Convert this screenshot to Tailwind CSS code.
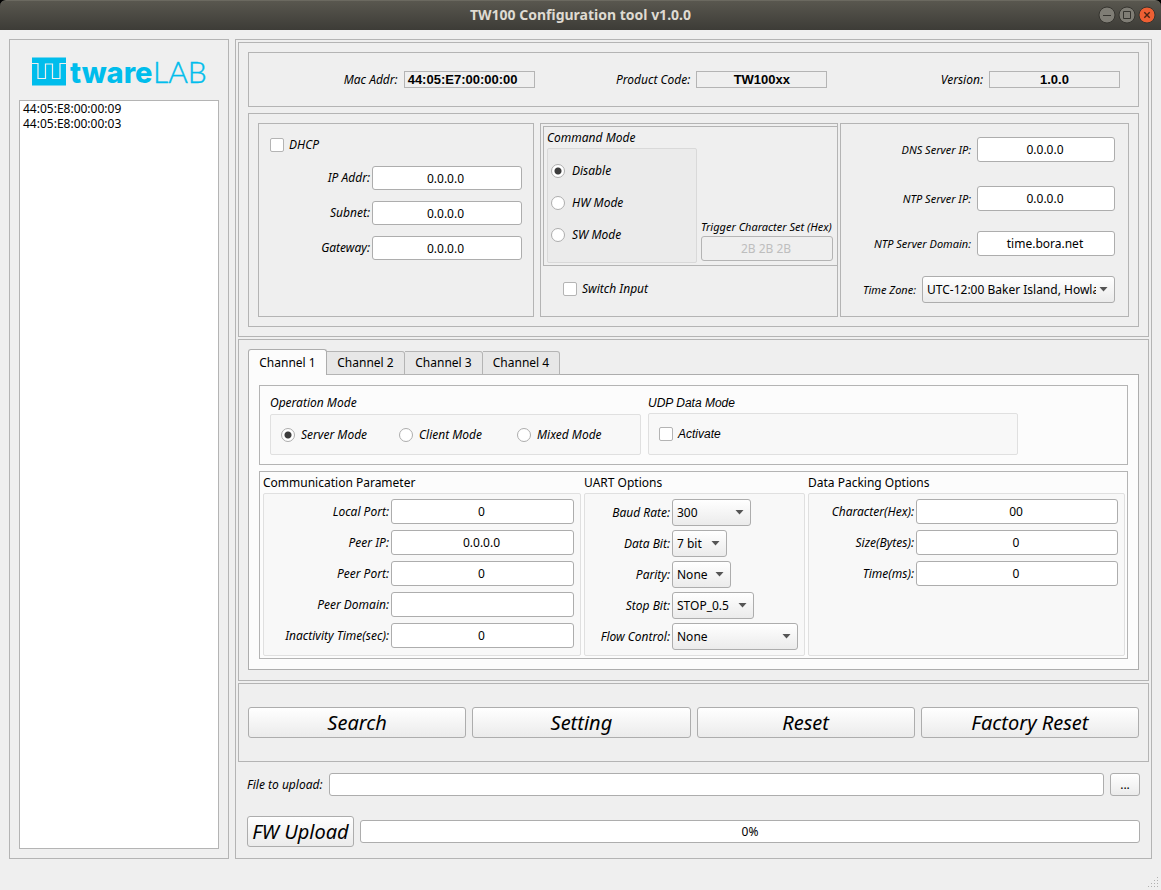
<!DOCTYPE html>
<html lang="en">
<head>
<meta charset="utf-8">
<meta name="viewport" content="width=device-width, initial-scale=1">
<title>TW100 Configuration tool v1.0.0</title>
<script src="https://cdn.jsdelivr.net/npm/@tailwindcss/browser@4"></script>
</head>
<body class="min-h-screen flex flex-col bg-[#efefef] font-['Noto_Sans','Open_Sans',sans-serif] text-[12px] leading-4 text-black">

<header class="bg-black">
  <div class="relative h-[30px] flex items-center justify-center rounded-t-md border-t border-[#6b6960] bg-linear-to-b from-[#59574f] to-[#3d3c37] pb-[2px]">
    <h1 class="text-[14px] font-bold text-[#dfdbd2]">TW100 Configuration tool v1.0.0</h1>
    <div class="absolute right-[5px] top-[5px] flex gap-[2px]">
      <button aria-label="Minimize"><svg class="block" width="18" height="18" viewBox="0 0 18 18"><circle cx="9" cy="9" r="8" fill="#7f7d75" stroke="#35342f"/><path d="M5 9.500h8" stroke="#35342f"/></svg></button>
      <button aria-label="Maximize"><svg class="block" width="18" height="18" viewBox="0 0 18 18"><circle cx="9" cy="9" r="8" fill="#7f7d75" stroke="#35342f"/><path d="M5.500 5.500h7v7h-7z" fill="none" stroke="#35342f"/></svg></button>
      <button aria-label="Close"><svg class="block" width="18" height="18" viewBox="0 0 18 18"><circle cx="9" cy="9" r="8" fill="#ee5f33" stroke="#35342f"/><path d="M6.300 6.300l5.400 5.400M11.700 6.300l-5.400 5.400" stroke="#4a2413" stroke-width="1.400"/></svg></button>
    </div>
  </div>
</header>

<main class="grow flex gap-[6px] px-[9px] pt-[9px]">
  <aside class="w-[220px] shrink-0 flex flex-col border border-[#b4b4b4] px-[9px] pt-[9px] pb-[9px]">
    <div class="h-[46px] mb-[5px] pl-3 flex items-center">
      <svg role="img" aria-label="twareLAB" width="186" height="46" viewBox="0 0 186 46" fill="#00bdec">
        <path d="M1 8.500H35V36.500H1z"/>
        <path d="M1 14.500H7V29.500H14.500V15H21.500V29.500H29V14.500H35" fill="none" stroke="#efefef" stroke-width="1.200"/>
        <text x="39" y="34" font-family="Inter, sans-serif" font-weight="800" font-size="29">tware</text>
        <text x="122" y="34" font-family="Lato, sans-serif" font-weight="300" font-size="30" stroke="#00bdec" stroke-width="0.4">LAB</text>
      </svg>
    </div>
    <ul class="grow border border-[#b4b4b4] bg-white px-[3px] leading-[15px]">
      <li>44:05:E8:00:00:09</li>
      <li>44:05:E8:00:00:03</li>
    </ul>
  </aside>

  <div class="grow min-w-0 flex flex-col gap-[2px] border border-[#b4b4b4] p-[2px]">
    <section class="flex flex-col gap-[6px] border border-[#b4b4b4] p-[9px]">
      <dl class="h-[55px] grid grid-cols-3 gap-[7px] items-center border border-[#b4b4b4] pr-[18px]">
        <div class="flex items-center justify-end gap-[6px]">
          <dt class="italic">Mac Addr:</dt>
          <dd class="w-[131px] h-[17px] border border-[#b4b4b4] px-[3px] font-['Liberation_Sans',sans-serif] text-[13px] leading-[15px] font-bold">44:05:E7:00:00:00</dd>
        </div>
        <div class="flex items-center justify-end gap-[6px]">
          <dt class="italic">Product Code:</dt>
          <dd class="w-[131px] h-[17px] border border-[#b4b4b4] text-center font-['Liberation_Sans',sans-serif] text-[13px] leading-[15px] font-bold">TW100xx</dd>
        </div>
        <div class="flex items-center justify-end gap-[6px]">
          <dt class="italic">Version:</dt>
          <dd class="w-[131px] h-[17px] border border-[#b4b4b4] text-center font-['Liberation_Sans',sans-serif] text-[13px] leading-[15px] font-bold">1.0.0</dd>
        </div>
      </dl>

      <div class="h-[214px] grid grid-cols-[282fr_300fr_289fr] border border-[#b4b4b4] p-[9px]">
        <div class="min-w-0 mr-[6px] border border-[#b4b4b4] pl-[11px] pr-[11px] pt-[13px]">
          <label class="flex items-center gap-[5px] h-4 italic"><input type="checkbox" class="appearance-none size-[14px] rounded-[2px] border border-[#b4b4b4] bg-white checked:bg-[#444]">DHCP</label>
          <div class="grid grid-cols-[1fr_150px] gap-x-[2px] gap-y-[11px] items-center pt-[13px] italic text-right">
            <label for="ip">IP Addr:</label>
            <input id="ip" value="0.0.0.0" class="w-full min-w-0 h-[24px] rounded-[3px] border border-[#adadad] bg-white pr-[3px] text-center not-italic">
            <label for="subnet">Subnet:</label>
            <input id="subnet" value="0.0.0.0" class="w-full min-w-0 h-[24px] rounded-[3px] border border-[#adadad] bg-white pr-[3px] text-center not-italic">
            <label for="gateway">Gateway:</label>
            <input id="gateway" value="0.0.0.0" class="w-full min-w-0 h-[24px] rounded-[3px] border border-[#adadad] bg-white pr-[3px] text-center not-italic">
          </div>
        </div>

        <div class="min-w-0 mr-[2px] border border-[#b4b4b4] pl-[2px] pt-[2px]">
          <div class="h-[140px] flex items-end gap-[4px] border border-r-0 border-[#b4b4b4] pl-[3px] pr-[4px] pb-[2px]">
            <fieldset class="w-[150px] shrink-0 italic">
              <legend class="h-[18px]">Command Mode</legend>
              <div class="h-[115px] flex flex-col gap-4 rounded-[2px] border border-[#d9d9d9] bg-[#ebebeb] pl-[3px] pt-[14px]">
                <label class="flex items-center gap-[7px] h-4"><input type="radio" name="cmd" checked class="appearance-none size-[14px] rounded-full border border-[#adadad] bg-white checked:bg-[radial-gradient(circle,#3c3c3c_3px,white_4px)]">Disable</label>
                <label class="flex items-center gap-[7px] h-4"><input type="radio" name="cmd" class="appearance-none size-[14px] rounded-full border border-[#adadad] bg-white checked:bg-[radial-gradient(circle,#3c3c3c_3px,white_4px)]">HW Mode</label>
                <label class="flex items-center gap-[7px] h-4"><input type="radio" name="cmd" class="appearance-none size-[14px] rounded-full border border-[#adadad] bg-white checked:bg-[radial-gradient(circle,#3c3c3c_3px,white_4px)]">SW Mode</label>
              </div>
            </fieldset>
            <div class="grow min-w-0 flex flex-col gap-px pb-[2px]">
              <label for="trigger" class="italic text-[11px] whitespace-nowrap">Trigger Character Set (Hex)</label>
              <input id="trigger" value="2B 2B 2B" disabled class="w-full h-[25px] rounded-[3px] border border-[#b4b4b4] pr-[2px] text-center text-[#bebebe]">
            </div>
          </div>
          <label class="flex items-center gap-[5px] h-4 mt-[15px] ml-[20px] italic"><input type="checkbox" class="appearance-none size-[14px] rounded-[2px] border border-[#b4b4b4] bg-white checked:bg-[#444]">Switch Input</label>
        </div>

        <div class="min-w-0 border border-[#b4b4b4] pr-[13px] pt-[13px] text-right italic">
          <div class="flex items-center justify-end gap-[6px] text-[11px]"><label for="dns">DNS Server IP:</label>
            <input id="dns" value="0.0.0.0" class="w-[138px] h-[25px] rounded-[3px] border border-[#adadad] bg-white pr-[2px] text-center text-[12px] not-italic"></div>
          <div class="flex items-center justify-end gap-[6px] mt-[24px] text-[11px]"><label for="ntp">NTP Server IP:</label>
            <input id="ntp" value="0.0.0.0" class="w-[138px] h-[25px] rounded-[3px] border border-[#adadad] bg-white pr-[2px] text-center text-[12px] not-italic"></div>
          <div class="flex items-center justify-end gap-[6px] mt-[20px] text-[11px]"><label for="ntpd">NTP Server Domain:</label>
            <input id="ntpd" value="time.bora.net" class="w-[138px] h-[25px] rounded-[3px] border border-[#adadad] bg-white pr-[2px] text-center text-[12px] not-italic"></div>
          <div class="flex items-center justify-end gap-[6px] mt-[20px] text-[11px]"><label for="tz">Time Zone:</label>
            <div class="relative w-[193px]">
              <select id="tz" class="appearance-none w-full h-[27px] rounded-[3px] border border-[#adadad] bg-linear-to-b from-white to-[#ebebeb] pl-[4px] pr-[18px] text-[12px] not-italic text-clip overflow-hidden"><option>UTC-12:00 Baker Island, Howland Island</option></select>
              <svg class="absolute right-[7px] top-[11px] pointer-events-none" width="9" height="5" viewBox="0 0 9 5"><path d="M0.500 0h8l-4 4.500z" fill="#555"/></svg>
            </div></div>
        </div>
      </div>
    </section>

    <section class="border border-[#b4b4b4] p-[9px]">
      <div role="tablist" class="relative flex items-end h-[26px] -mb-px">
        <button role="tab" aria-selected="true" class="w-[79px] h-[26px] rounded-t-[3px] border border-b-0 border-[#adadad] bg-[#fcfcfc]">Channel 1</button>
        <button role="tab" aria-selected="false" class="w-[78px] h-[24px] rounded-tr-[3px] border border-l-0 border-[#b4b4b4] bg-[#e7e7e7]">Channel 2</button>
        <button role="tab" aria-selected="false" class="w-[78px] h-[24px] rounded-tr-[3px] border border-l-0 border-[#b4b4b4] bg-[#e7e7e7]">Channel 3</button>
        <button role="tab" aria-selected="false" class="w-[77px] h-[24px] rounded-tr-[3px] border border-l-0 border-[#b4b4b4] bg-[#e7e7e7]">Channel 4</button>
      </div>
      <div role="tabpanel" class="flex flex-col gap-[6px] border border-[#adadad] bg-[#fcfcfc] p-[10px] mb-px">
        <div class="h-[80px] flex items-start gap-[7px] border border-[#b4b4b4] pl-[10px] pt-[9px]">
          <fieldset class="w-[371px] italic">
            <legend class="h-[19px]">Operation Mode</legend>
            <div class="h-[41px] grid grid-cols-3 items-center rounded-[2px] border border-[#e0e0e0] bg-[#f8f8f8] pl-[10px] pr-[5px]">
              <label class="flex items-center gap-[6px]"><input type="radio" name="op" checked class="appearance-none size-[14px] rounded-full border border-[#adadad] bg-white checked:bg-[radial-gradient(circle,#3c3c3c_3px,white_4px)]">Server Mode</label>
              <label class="flex items-center gap-[6px]"><input type="radio" name="op" class="appearance-none size-[14px] rounded-full border border-[#adadad] bg-white checked:bg-[radial-gradient(circle,#3c3c3c_3px,white_4px)]">Client Mode</label>
              <label class="flex items-center gap-[6px]"><input type="radio" name="op" class="appearance-none size-[14px] rounded-full border border-[#adadad] bg-white checked:bg-[radial-gradient(circle,#3c3c3c_3px,white_4px)]">Mixed Mode</label>
            </div>
          </fieldset>
          <fieldset class="w-[370px] italic font-['Liberation_Sans',sans-serif]">
            <legend class="h-[18px]">UDP Data Mode</legend>
            <div class="h-[42px] flex items-center rounded-[2px] border border-[#e0e0e0] bg-[#f8f8f8] pl-[10px]">
              <label class="flex items-center gap-[5px]"><input type="checkbox" class="appearance-none size-[14px] rounded-[2px] border border-[#b4b4b4] bg-white checked:bg-[#444]">Activate</label>
            </div>
          </fieldset>
        </div>

        <div class="h-[188px] grid grid-cols-[318fr_221fr_317fr] gap-[3px] border border-[#b4b4b4] pl-[3px] pr-[2px] pt-[3px] pb-[2px]">
          <fieldset class="min-w-0">
            <legend class="h-[18px]">Communication Parameter</legend>
            <div class="h-[163px] grid grid-cols-[1fr_183px] auto-rows-[25px] gap-x-[2px] gap-y-[6px] items-center rounded-[2px] border border-[#e0e0e0] bg-[#f8f8f8] pt-[5px] pr-[6px] text-right italic">
              <label for="lport">Local Port:</label>
              <input id="lport" value="0" class="w-full min-w-0 h-[25px] rounded-[3px] border border-[#adadad] bg-white pr-[2px] text-center not-italic">
              <label for="pip">Peer IP:</label>
              <input id="pip" value="0.0.0.0" class="w-full min-w-0 h-[25px] rounded-[3px] border border-[#adadad] bg-white pr-[2px] text-center not-italic">
              <label for="pport">Peer Port:</label>
              <input id="pport" value="0" class="w-full min-w-0 h-[25px] rounded-[3px] border border-[#adadad] bg-white pr-[2px] text-center not-italic">
              <label for="pdom">Peer Domain:</label>
              <input id="pdom" value="" class="w-full min-w-0 h-[25px] rounded-[3px] border border-[#adadad] bg-white pr-[2px] text-center not-italic">
              <label for="inact">Inactivity Time(sec):</label>
              <input id="inact" value="0" class="w-full min-w-0 h-[25px] rounded-[3px] border border-[#adadad] bg-white pr-[2px] text-center not-italic">
            </div>
          </fieldset>
          <fieldset class="min-w-0">
            <legend class="h-[18px]">UART Options</legend>
            <div class="h-[163px] grid grid-cols-[1fr_126px] auto-rows-[27px] gap-x-[2px] gap-y-[4px] items-center rounded-[2px] border border-[#e0e0e0] bg-[#f8f8f8] pt-[5px] pr-[6px] italic">
              <label for="baud" class="text-right">Baud Rate:</label>
              <div class="relative w-[79px]"><select id="baud" class="appearance-none w-full h-[27px] rounded-[3px] border border-[#adadad] bg-linear-to-b from-white to-[#ebebeb] pl-[4px] not-italic"><option>300</option></select><svg class="absolute right-[7px] top-[11px] pointer-events-none" width="9" height="5" viewBox="0 0 9 5"><path d="M0.500 0h8l-4 4.500z" fill="#555"/></svg></div>
              <label for="dbit" class="text-right">Data Bit:</label>
              <div class="relative w-[55px]"><select id="dbit" class="appearance-none w-full h-[27px] rounded-[3px] border border-[#adadad] bg-linear-to-b from-white to-[#ebebeb] pl-[4px] not-italic"><option>7 bit</option></select><svg class="absolute right-[7px] top-[11px] pointer-events-none" width="9" height="5" viewBox="0 0 9 5"><path d="M0.500 0h8l-4 4.500z" fill="#555"/></svg></div>
              <label for="parity" class="text-right">Parity:</label>
              <div class="relative w-[59px]"><select id="parity" class="appearance-none w-full h-[27px] rounded-[3px] border border-[#adadad] bg-linear-to-b from-white to-[#ebebeb] pl-[4px] not-italic"><option>None</option></select><svg class="absolute right-[7px] top-[11px] pointer-events-none" width="9" height="5" viewBox="0 0 9 5"><path d="M0.500 0h8l-4 4.500z" fill="#555"/></svg></div>
              <label for="sbit" class="text-right">Stop Bit:</label>
              <div class="relative w-[82px]"><select id="sbit" class="appearance-none w-full h-[27px] rounded-[3px] border border-[#adadad] bg-linear-to-b from-white to-[#ebebeb] pl-[4px] not-italic"><option>STOP_0.5</option></select><svg class="absolute right-[7px] top-[11px] pointer-events-none" width="9" height="5" viewBox="0 0 9 5"><path d="M0.500 0h8l-4 4.500z" fill="#555"/></svg></div>
              <label for="flow" class="text-right">Flow Control:</label>
              <div class="relative"><select id="flow" class="appearance-none w-full h-[27px] rounded-[3px] border border-[#adadad] bg-linear-to-b from-white to-[#ebebeb] pl-[4px] not-italic"><option>None</option></select><svg class="absolute right-[7px] top-[11px] pointer-events-none" width="9" height="5" viewBox="0 0 9 5"><path d="M0.500 0h8l-4 4.500z" fill="#555"/></svg></div>
            </div>
          </fieldset>
          <fieldset class="min-w-0">
            <legend class="h-[18px]">Data Packing Options</legend>
            <div class="h-[163px] grid grid-cols-[1fr_202px] auto-rows-[25px] gap-x-[2px] gap-y-[6px] items-center rounded-[2px] border border-[#e0e0e0] bg-[#f8f8f8] pt-[5px] pr-[6px] text-right italic">
              <label for="chr">Character(Hex):</label>
              <input id="chr" value="00" class="w-full min-w-0 h-[25px] rounded-[3px] border border-[#adadad] bg-white pr-[2px] text-center not-italic">
              <label for="size">Size(Bytes):</label>
              <input id="size" value="0" class="w-full min-w-0 h-[25px] rounded-[3px] border border-[#adadad] bg-white pr-[2px] text-center not-italic">
              <label for="time">Time(ms):</label>
              <input id="time" value="0" class="w-full min-w-0 h-[25px] rounded-[3px] border border-[#adadad] bg-white pr-[2px] text-center not-italic">
            </div>
          </fieldset>
        </div>
      </div>
    </section>

    <section class="h-[79px] grid grid-cols-4 gap-[6px] items-center border border-[#b4b4b4] px-[9px]">
      <button class="h-[31px] rounded-[3px] border border-[#adadad] bg-linear-to-b from-white to-[#ebebeb] text-[20px] leading-7 italic">Search</button>
      <button class="h-[31px] rounded-[3px] border border-[#adadad] bg-linear-to-b from-white to-[#ebebeb] text-[20px] leading-7 italic">Setting</button>
      <button class="h-[31px] rounded-[3px] border border-[#adadad] bg-linear-to-b from-white to-[#ebebeb] text-[20px] leading-7 italic">Reset</button>
      <button class="h-[31px] rounded-[3px] border border-[#adadad] bg-linear-to-b from-white to-[#ebebeb] text-[20px] leading-7 italic">Factory Reset</button>
    </section>

    <section class="flex flex-col gap-[20px] px-[9px] pt-[9px] pb-[9px]">
      <div class="flex items-center gap-[6px]">
        <label for="file" class="w-[76px] whitespace-nowrap italic">File to upload:</label>
        <input id="file" class="grow min-w-0 h-[23px] rounded-[3px] border border-[#adadad] bg-white px-1">
        <button aria-label="Browse" class="w-[30px] h-[23px] rounded-[3px] border border-[#adadad] bg-linear-to-b from-white to-[#ebebeb]">...</button>
      </div>
      <div class="flex items-center gap-[6px]">
        <button class="w-[107px] h-[31px] whitespace-nowrap rounded-[3px] border border-[#adadad] bg-linear-to-b from-white to-[#ebebeb] text-[20px] leading-7 italic">FW Upload</button>
        <div role="progressbar" aria-valuenow="0" aria-valuemin="0" aria-valuemax="100" aria-label="Upload progress" class="grow h-[23px] rounded-[3px] border border-[#adadad] bg-white text-center leading-[21px]">0%</div>
      </div>
    </section>
  </div>
</main>

<footer class="h-[31px] flex items-end justify-end p-[2px]">
  <svg width="11" height="11" viewBox="0 0 11 11" fill="#b0b0b0" aria-hidden="true"><path d="M9 0h1v1h-1zM6 3h1v1h-1zM9 3h1v1h-1zM3 6h1v1h-1zM6 6h1v1h-1zM9 6h1v1h-1zM0 9h1v1h-1zM3 9h1v1h-1zM6 9h1v1h-1zM9 9h1v1h-1z"/></svg>
</footer>
</body>
</html>
